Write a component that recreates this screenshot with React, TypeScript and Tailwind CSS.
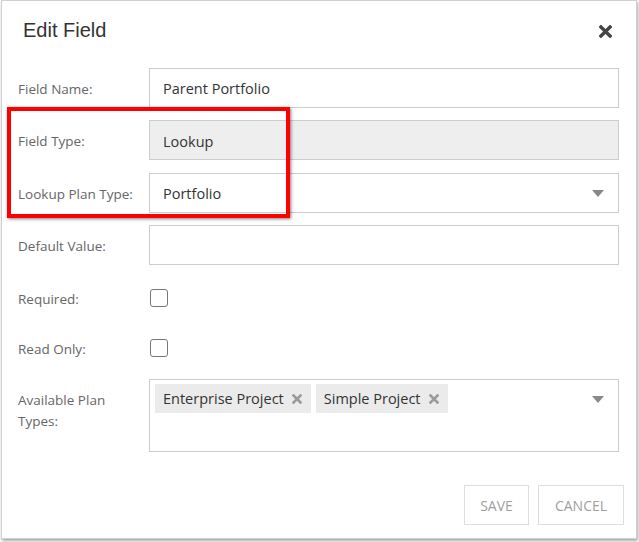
import React from "react";

const labelCls = "w-[131px] shrink-0 text-[13.5px] text-[#666] leading-[21px]";
const inputCls = "flex-1 h-[40px] border border-[#cccccc] flex items-center pl-[13px] pt-[2px] text-[14.5px] text-[#333]";

function Caret() {
  return (
    <svg width="12" height="7" viewBox="0 0 12 7" className="absolute right-[14px] top-[16px]">
      <path d="M0 0 L12 0 L6 7 Z" fill="#888" />
    </svg>
  );
}

function SmallX({ size = 10, color = "#999" }: { size?: number; color?: string }) {
  return (
    <svg width={size} height={size} viewBox="0 0 10 10">
      <path d="M1.5 1.5 L8.5 8.5 M8.5 1.5 L1.5 8.5" stroke={color} strokeWidth="2.6" strokeLinecap="square" />
    </svg>
  );
}

function Tag({ text }: { text: string }) {
  return (
    <div className="h-[29px] bg-[#ebebeb] flex items-center pl-[8px] pr-[9px] gap-[8px] text-[14.5px] text-[#333]">
      <span className="pt-[1px]">{text}</span>
      <SmallX size={10} color="#9a9a9a" />
    </div>
  );
}

export default function App() {
  return (
    <div className="w-[639px] h-[542px] bg-white" style={{ fontFamily: '"Open Sans", "Noto Sans", sans-serif' }}>
      <div className="ml-[1px] w-[636px] h-[539px] border border-[#d0d0d0] bg-white shadow-[1px_2px_3px_rgba(0,0,0,0.35)] flex flex-col">
        <div className="h-[67px] flex items-start justify-between pl-[21px] pr-[24px] pt-[15px]">
          <div className="text-[20px] leading-[28px] text-[#333]" style={{ fontFamily: '"Liberation Sans", Arial, sans-serif' }}>
            Edit Field
          </div>
          <div className="mt-[9px]">
            <SmallX size={13} color="#444" />
          </div>
        </div>
        <div className="pl-[16px] pr-[17px] flex flex-col">
          <div className="relative">
            <div className="flex items-center">
              <div className={labelCls + " pt-[2px]"}>Field Name:</div>
              <div className={inputCls}>Parent Portfolio</div>
            </div>
            <div className="flex items-center mt-[12px]">
              <div className={labelCls + " pt-[2px]"}>Field Type:</div>
              <div className={inputCls + " bg-[#eeeeee] pt-[4px]"}>Lookup</div>
            </div>
            <div className="flex items-center mt-[13px]">
              <div className={labelCls + " pt-[2px]"}>Lookup Plan Type:</div>
              <div className={inputCls + " relative"}>
                Portfolio
                <Caret />
              </div>
            </div>
            <div className="absolute left-[-11px] top-[39px] w-[283px] h-[111px] border-[4px] border-[#ff0000] shadow-[1px_1px_3px_rgba(0,0,0,0.5)] pointer-events-none" />
          </div>
          <div className="flex items-center mt-[12px]">
            <div className={labelCls + " pt-[2px]"}>Default Value:</div>
            <div className={inputCls}></div>
          </div>
          <div className="flex items-center mt-[15px] h-[36px]">
            <div className={labelCls + " pt-[2px]"}>Required:</div>
            <div className="ml-[1px] w-[18px] h-[18px] border-[1.5px] border-[#777] rounded-[3px]" />
          </div>
          <div className="flex items-center mt-[14px] h-[36px]">
            <div className={labelCls + " pt-[2px]"}>Read Only:</div>
            <div className="ml-[1px] w-[18px] h-[18px] border-[1.5px] border-[#777] rounded-[3px]" />
          </div>
          <div className="flex items-start mt-[13px]">
            <div className={labelCls + " pt-[11px]"}>
              Available Plan
              <br />
              Types:
            </div>
            <div className="flex-1 h-[73px] border border-[#cccccc] relative flex items-start gap-[5px] pl-[5px] pt-[4px]">
              <Tag text="Enterprise Project" />
              <Tag text="Simple Project" />
              <svg width="12" height="7" viewBox="0 0 12 7" className="absolute right-[14px] top-[16px]">
                <path d="M0 0 L12 0 L6 7 Z" fill="#888" />
              </svg>
            </div>
          </div>
        </div>
        <div className="flex justify-end gap-[9px] pr-[12px] mt-[33px]">
          <div className="w-[65px] h-[40px] border border-[#dddddd] flex items-center justify-center text-[14px] text-[#a0a0a0]">SAVE</div>
          <div className="w-[86px] h-[40px] border border-[#dddddd] flex items-center justify-center text-[14px] text-[#a0a0a0]">CANCEL</div>
        </div>
      </div>
    </div>
  );
}
